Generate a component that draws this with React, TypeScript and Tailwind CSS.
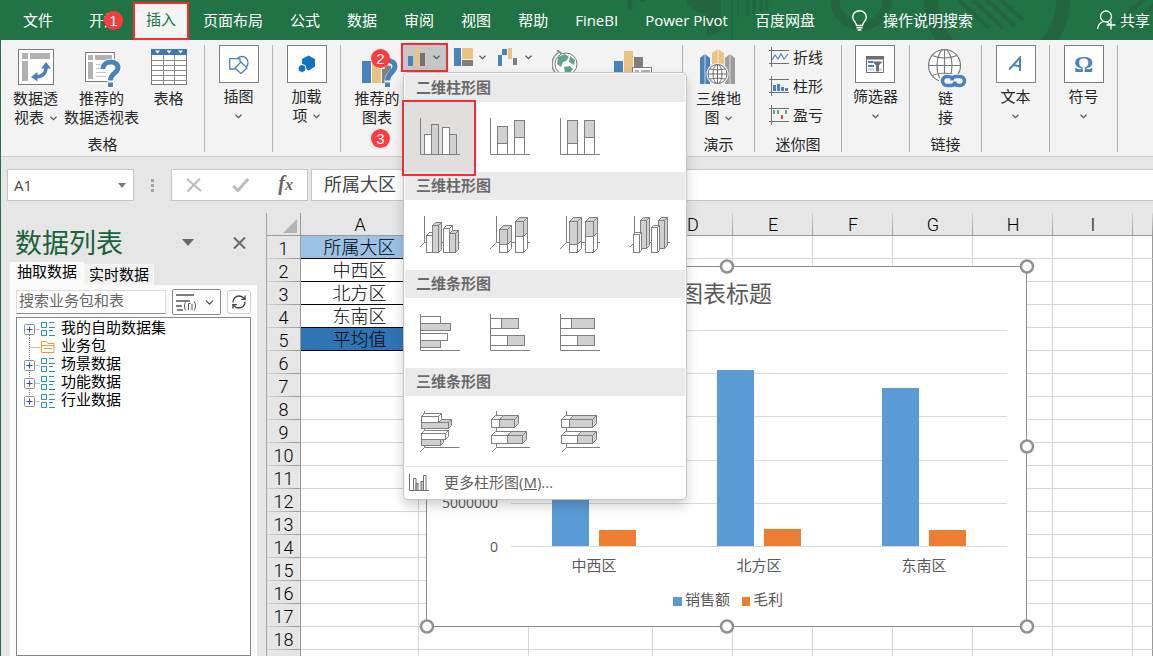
import type { ReactNode } from "react";
import { ChevronDown, RefreshCw } from "lucide-react";

const tabs = ["页面布局", "公式", "数据", "审阅", "视图", "帮助", "FineBI", "Power Pivot", "百度网盘"];

const columns = ["A", "B", "C", "D", "E", "F", "G", "H", "I", ""];
const rowCount = 19;
const cellValues = ["所属大区", "中西区", "北方区", "东南区", "平均值"];

const treeItems = [
  { name: "我的自助数据集", folder: false },
  { name: "业务包", folder: true },
  { name: "场景数据", folder: false },
  { name: "功能数据", folder: false },
  { name: "行业数据", folder: false },
];

// bar tops inside the 600x360 chart
const chartData = [
  { name: "中西区", x: 126, sales: 140, profit: 263 },
  { name: "北方区", x: 291, sales: 103, profit: 262 },
  { name: "东南区", x: 456, sales: 121, profit: 263 },
];

/* ---------- small shared pieces ---------- */

function Badge({ n, className }: { n: number; className: string }) {
  return (
    <span
      className={`absolute z-40 flex size-[19px] items-center justify-center rounded-full bg-[#fb3b3e] font-['Liberation_Sans',sans-serif] text-[15px] leading-none text-white ${className}`}
    >
      {n}
    </span>
  );
}

function Chevron({ className = "" }: { className?: string }) {
  return (
    <svg width="7" height="5" viewBox="0 0 7 5" className={`inline-block ${className}`}>
      <path d="M0.5 0.8 L3.5 3.6 L6.5 0.8" fill="none" stroke="#555" strokeWidth="1.2" />
    </svg>
  );
}

function Group({ label, className, children }: { label?: string; className: string; children: ReactNode }) {
  return (
    <div className={`relative flex h-[107px] shrink-0 flex-col border-r border-[#b1b1b1] ${className}`}>
      <div className="flex flex-1 justify-center">{children}</div>
      {label && <div className="text-center leading-4">{label}</div>}
    </div>
  );
}

function BigButton({ icon, children, className = "" }: { icon: ReactNode; children: ReactNode; className?: string }) {
  return (
    <button className={`flex flex-col items-center pt-1 leading-[19px] whitespace-nowrap ${className}`}>
      {icon}
      <span className="mt-1">{children}</span>
    </button>
  );
}

function BoxButton({ icon, children }: { icon: ReactNode; children: ReactNode }) {
  return (
    <button className="flex flex-col items-center leading-[19px] whitespace-nowrap">
      <span className="flex h-[38px] w-10 items-center justify-center border border-[#7d7d7d] bg-white">{icon}</span>
      <span className="mt-1 flex flex-col items-center">{children}</span>
    </button>
  );
}

/* ---------- ribbon icons ---------- */

function PivotIcon() {
  return (
    <svg width="36" height="36" viewBox="0 0 36 36">
      <rect x="0.5" y="0.5" width="35" height="35" fill="#fff" stroke="#7a7a7a" />
      <path d="M4 4h6v6H4zM12 4h20v6H12zM4 12h6v20H4z" fill="#b1b1b1" />
      <path d="M17 28C24 28 28 25 28 18" fill="none" stroke="#4a82bd" strokeWidth="3.500" />
      <path d="M28 13l5 6.500H23zM13 28l6.500-5v9.500z" fill="#4a82bd" />
    </svg>
  );
}

function RecommendedPivotIcon() {
  return (
    <svg width="32" height="36" viewBox="2 0 32 36" overflow="visible">
      <rect x="1.5" y="3.5" width="29" height="29" fill="#fff" stroke="#7a7a7a" />
      <path d="M4 6h5v5H4zM11 6h17v5H11zM4 13h5v17H4z" fill="#b1b1b1" />
      <path d="M12 15.5h8M12 19.500h8M12 23.500h10M12 27.500h10" stroke="#c6c6c6" />
      <path d="M19 21c-1-10 15-10 15-2.500c0 5.500-7 5-7 14M27 31v8" fill="none" stroke="#fff" strokeWidth="7" />
      <path d="M19 20c0-9 15-9 15-1.500c0 6-7.500 5-7.500 13" fill="none" stroke="#4a82bd" strokeWidth="5" />
      <path d="M24 33.500h5v4.500h-5z" fill="#4a82bd" />
    </svg>
  );
}

function TableIcon() {
  return (
    <svg width="36" height="36" viewBox="0 0 36 36">
      <rect x="0.5" y="0.5" width="35" height="35" fill="#fff" stroke="#7a7a7a" />
      <path d="M0.500 11.500h35M0.500 16.500h35M0.500 21.500h35M0.500 26.500h35M0.500 31.500h35M12.500 6v30M23.500 6v30" stroke="#8d8d8d" />
      <path d="M0 0h36v6H0z" fill="#3f76b5" />
      <path d="M4 1.500h5l-2.500 3zM15.500 1.500h5l-2.500 3zM27 1.500h5l-2.500 3z" fill="#fff" />
    </svg>
  );
}

function RecommendedChartIcon() {
  return (
    <svg width="30" height="36" viewBox="0 0 30 36" overflow="visible">
      <path d="M0 12h9v22H0z" fill="#4a82bd" />
      <path d="M10 4h9v30h-9z" fill="#eac282" />
      <path d="M20 9h9v25h-9z" fill="#7f7f7f" />
      <path d="M19 20c0-9 15-9 15-1.500c0 6-8 5-8 13M26 31v8" fill="none" stroke="#f3f3f3" strokeWidth="7" />
      <path d="M19 16c2-6 14-6 14 1.500c0 6-7.500 6-7.500 14" fill="none" stroke="#4a82bd" strokeWidth="5" />
      <path d="M23 33.500h5v4.500h-5z" fill="#4a82bd" />
    </svg>
  );
}

function ShapesIcon() {
  return (
    <svg width="20" height="20" viewBox="0 0 20 20" fill="none" stroke="#4a82bd" strokeWidth="1.300">
      <path d="M7 15H0.700V4.700H11V8" />
      <path d="M9 4a6 6 0 1 1 8 9" />
      <path d="M12 8l6 6-6 5.500-6-5.500z" fill="#fff" />
    </svg>
  );
}

function AddinsIcon() {
  return (
    <svg width="18" height="18" viewBox="0 0 18 18" fill="#0f73c6">
      <path d="M10.500 0.500L17 4v7.500l-6.500 4L8 14l-0.500-3L4 9V4z" />
      <circle cx="4" cy="13.500" r="4" stroke="#fff" />
    </svg>
  );
}

function MapIcon() {
  return (
    <svg width="36" height="36" viewBox="0 0 36 36">
      <path d="M0 9l5-4 5 4v26H0z" fill="#4a82bd" />
      <path d="M12 4l6-4 6 4v18H12z" fill="#eac282" />
      <path d="M25 9l5-4 5 4v26H25z" fill="#9c9c9c" />
      <path d="M5 5v30M18 0v20M30 5v30" stroke="#fff" strokeWidth="0.700" />
      <circle cx="17.500" cy="25" r="11" fill="#f3f3f3" />
      <g fill="#fff" stroke="#6b6b6b">
        <circle cx="17.500" cy="25" r="9.500" />
        <ellipse cx="17.500" cy="25" rx="4.500" ry="9.500" />
        <path d="M8 25h19M17.500 15.500v19M10 20q7.500 2 15 0M10 30q7.500-2 15 0" fill="none" />
      </g>
    </svg>
  );
}

function LinkIcon() {
  return (
    <svg width="36" height="36" viewBox="0 0 36 36" overflow="visible">
      <g fill="none" stroke="#7a7a7a" strokeWidth="1.200">
        <circle cx="16.500" cy="16.500" r="16" fill="#fff" />
        <ellipse cx="16.500" cy="16.500" rx="7.500" ry="16" />
        <path d="M0.500 16.500h32M16.500 0.500v32M4 6.500q12.500 5 25 0M4 26.500q12.500-5 25 0" />
      </g>
      <rect x="11" y="25" width="27" height="13" rx="6.500" fill="#f3f3f3" />
      <g fill="none" stroke="#4a82bd" strokeWidth="3.500">
        <path d="M25 29.500c-2-2-3-2-5-2h-1a4.500 4.500 0 0 0 0 9h4c2.500 0 4-1.500 4-4" />
        <path d="M26 34.500c2 2 3 2 5 2h1a4.500 4.500 0 0 0 0-9h-4c-2.500 0-4 1.500-4 4" />
      </g>
    </svg>
  );
}

function FilterIcon() {
  return (
    <svg width="18" height="17" viewBox="0 0 18 17">
      <path d="M0.500 0.500h17v16H0.500z" fill="#fff" stroke="#6f6f6f" />
      <path d="M0 0h18v3.500H0z" fill="#6f6f6f" />
      <path d="M2 5h5v2H2zM2 9h6v2H2z" fill="#4a82bd" />
      <path d="M2 12.500h6v2H2zM12 12.500h4v2h-4z" fill="#b8cde6" />
      <path d="M6.500 5.500h10l-3.500 4v6h-3v-6z" fill="#6f6f6f" />
    </svg>
  );
}

function SparkIcon({ kind }: { kind: "line" | "column" | "winloss" }) {
  return (
    <svg width="20" height="20" viewBox="0 0 20 20" fill="none">
      <path d="M0 3.500h20M0 16.500h20M2.500 0v20" stroke="#6f6f6f" />
      {kind === "line" && <path d="M3 13l3-5 3 4 3-5 3 5 4-5" stroke="#4a82bd" strokeWidth="1.200" />}
      {kind === "column" && <path d="M4 9h3v6H4zM8 8h3v7H8zM12 11h3v4h-3zM16 12h3v3h-3z" fill="#4a82bd" />}
      {kind === "winloss" && (
        <>
          <path d="M4 5h2v4H4zM8 5h2v4H8zM16 5h2v4h-2z" fill="#5ea583" />
          <path d="M12 10h2v4h-2z" fill="#d8502f" />
        </>
      )}
    </svg>
  );
}

function GlobeIcon() {
  return (
    <svg width="26" height="28" viewBox="0 0 26 28">
      <circle cx="14" cy="14" r="11" fill="#fff" stroke="#7a7a7a" />
      <path d="M6 7l7-3 4 3-3 4-3 1-2 5-4-3zM18 6l5 4-1 5-5-3zM12 17l6-1 3 3-4 5-4-1z" fill="#62a48a" />
      <path d="M7 2C-2 8-2 20 6 25" fill="none" stroke="#8f8f8f" strokeWidth="1.500" />
      <path d="M5 0l5 4" stroke="#8f8f8f" strokeWidth="2" />
    </svg>
  );
}

/* ---------- chart gallery icons ---------- */

const GREY = "#d0d0d0";
const WHITE = "#fff";

// box drawn from its front face, with depth d going up and right
function Cuboid({ x, y, w, h, d, fill }: { x: number; y: number; w: number; h: number; d: number; fill: string }) {
  return (
    <g fill={fill}>
      <path d={`M${x} ${y}l${d} ${-d}h${w}v${h}l${-d} ${d}`} />
      <rect x={x} y={y} width={w} height={h} />
      <path d={`M${x + w} ${y}l${d} ${-d}`} />
    </g>
  );
}

function Bar({ x, y, w, h, fill }: { x: number; y: number; w: number; h: number; fill: string }) {
  return <rect x={x} y={y} width={w} height={h} fill={fill} />;
}

function GalleryIcon({ children }: { children: ReactNode }) {
  return (
    <svg width="40" height="42" viewBox="0 0 40 42" fill="none" stroke="#7f7f7f" className="mt-px">
      {children}
    </svg>
  );
}

const flatAxis = <path d="M0.5 1V37.5H40" />;
const deepAxis = (x: number) => <path d={`M${x} 1V27.500H40M${x} 27.500L0 ${27.5 + x}`} />;
const deepBarAxis = (x: number) => <path d={`M${x} 0V36.500H${x + 35}M${x} 36.500l-4.500 4.500`} />;

const gallery = [
  {
    title: "二维柱形图",
    items: [
      {
        name: "簇状柱形图",
        icon: (
          <>
            <Bar x={4.5} y={17.5} w={7} h={20} fill={WHITE} />
            <Bar x={11.5} y={7.5} w={7} h={30} fill={GREY} />
            <Bar x={22.5} y={10.5} w={7} h={27} fill={WHITE} />
            <Bar x={29.5} y={17.5} w={7} h={20} fill={GREY} />
            {flatAxis}
          </>
        ),
      },
      {
        name: "堆积柱形图",
        icon: (
          <>
            <Bar x={7.5} y={9.5} w={10} h={17} fill={GREY} />
            <Bar x={7.5} y={26.5} w={10} h={11} fill={WHITE} />
            <Bar x={24.5} y={3.5} w={10} h={17} fill={GREY} />
            <Bar x={24.5} y={20.5} w={10} h={17} fill={WHITE} />
            {flatAxis}
          </>
        ),
      },
      {
        name: "百分比堆积柱形图",
        icon: (
          <>
            <Bar x={7.5} y={3.5} w={10} h={23} fill={GREY} />
            <Bar x={7.5} y={26.5} w={10} h={11} fill={WHITE} />
            <Bar x={24.5} y={3.5} w={10} h={17} fill={GREY} />
            <Bar x={24.5} y={20.5} w={10} h={17} fill={WHITE} />
            {flatAxis}
          </>
        ),
      },
    ],
  },
  {
    title: "三维柱形图",
    items: [
      {
        name: "三维簇状柱形图",
        icon: (
          <>
            {deepAxis(4.5)}
            <Cuboid x={6.5} y={20.5} w={6} h={17} d={3} fill={WHITE} />
            <Cuboid x={12.5} y={10.5} w={6} h={27} d={3} fill={GREY} />
            <Cuboid x={23.5} y={13.5} w={6} h={24} d={3} fill={WHITE} />
            <Cuboid x={29.5} y={18.5} w={6} h={19} d={3} fill={GREY} />
          </>
        ),
      },
      {
        name: "三维堆积柱形图",
        icon: (
          <>
            {deepAxis(6.5)}
            <Cuboid x={9.5} y={29.5} w={8} h={8} d={4} fill={WHITE} />
            <Cuboid x={9.5} y={14.5} w={8} h={15} d={4} fill={GREY} />
            <Cuboid x={25.5} y={21.5} w={8} h={16} d={4} fill={WHITE} />
            <Cuboid x={25.5} y={6.5} w={8} h={15} d={4} fill={GREY} />
          </>
        ),
      },
      {
        name: "三维百分比堆积柱形图",
        icon: (
          <>
            {deepAxis(6.5)}
            <Cuboid x={9.5} y={29.5} w={8} h={8} d={4} fill={WHITE} />
            <Cuboid x={9.5} y={6.5} w={8} h={23} d={4} fill={GREY} />
            <Cuboid x={25.5} y={21.5} w={8} h={16} d={4} fill={WHITE} />
            <Cuboid x={25.5} y={6.5} w={8} h={15} d={4} fill={GREY} />
          </>
        ),
      },
      {
        name: "三维柱形图",
        icon: (
          <>
            {deepAxis(4.5)}
            <Cuboid x={10.5} y={5.5} w={6} h={28} d={3} fill={GREY} />
            <Cuboid x={3.5} y={19.5} w={6} h={18} d={2} fill={WHITE} />
            <Cuboid x={28.5} y={5.5} w={6} h={28} d={3} fill={GREY} />
            <Cuboid x={21.5} y={12.5} w={6} h={25} d={2} fill={WHITE} />
          </>
        ),
      },
    ],
  },
  {
    title: "二维条形图",
    items: [
      {
        name: "簇状条形图",
        icon: (
          <>
            <Bar x={0.5} y={3.5} w={20} h={7} fill={WHITE} />
            <Bar x={0.5} y={10.5} w={30} h={7} fill={GREY} />
            <Bar x={0.5} y={20.5} w={27} h={7} fill={WHITE} />
            <Bar x={0.5} y={27.5} w={20} h={7} fill={GREY} />
            {flatAxis}
          </>
        ),
      },
      {
        name: "堆积条形图",
        icon: (
          <>
            <Bar x={0.5} y={5.5} w={11} h={10} fill={WHITE} />
            <Bar x={11.5} y={5.5} w={17} h={10} fill={GREY} />
            <Bar x={0.5} y={22.5} w={17} h={10} fill={WHITE} />
            <Bar x={17.5} y={22.5} w={17} h={10} fill={GREY} />
            {flatAxis}
          </>
        ),
      },
      {
        name: "百分比堆积条形图",
        icon: (
          <>
            <Bar x={0.5} y={5.5} w={11} h={10} fill={WHITE} />
            <Bar x={11.5} y={5.5} w={23} h={10} fill={GREY} />
            <Bar x={0.5} y={22.5} w={17} h={10} fill={WHITE} />
            <Bar x={17.5} y={22.5} w={17} h={10} fill={GREY} />
            {flatAxis}
          </>
        ),
      },
    ],
  },
  {
    title: "三维条形图",
    items: [
      {
        name: "三维簇状条形图",
        icon: (
          <>
            {deepBarAxis(4.5)}
            <Cuboid x={1.5} y={28.5} w={19} h={6} d={3} fill={GREY} />
            <Cuboid x={1.5} y={22.5} w={24} h={6} d={3} fill={WHITE} />
            <Cuboid x={1.5} y={11.5} w={27} h={6} d={3} fill={GREY} />
            <Cuboid x={1.5} y={5.5} w={17} h={6} d={3} fill={WHITE} />
          </>
        ),
      },
      {
        name: "三维堆积条形图",
        icon: (
          <>
            {deepBarAxis(6.5)}
            <Cuboid x={1.5} y={24.5} w={16} h={8} d={4} fill={WHITE} />
            <Cuboid x={17.5} y={24.5} w={15} h={8} d={4} fill={GREY} />
            <Cuboid x={1.5} y={8.5} w={8} h={8} d={4} fill={WHITE} />
            <Cuboid x={9.5} y={8.5} w={15} h={8} d={4} fill={GREY} />
          </>
        ),
      },
      {
        name: "三维百分比堆积条形图",
        icon: (
          <>
            {deepBarAxis(6.5)}
            <Cuboid x={1.5} y={24.5} w={16} h={8} d={4} fill={WHITE} />
            <Cuboid x={17.5} y={24.5} w={15} h={8} d={4} fill={GREY} />
            <Cuboid x={1.5} y={8.5} w={8} h={8} d={4} fill={WHITE} />
            <Cuboid x={9.5} y={8.5} w={23} h={8} d={4} fill={GREY} />
          </>
        ),
      },
    ],
  },
];

/* ---------- column chart drop-down ---------- */

function ChartMenu() {
  return (
    <div className="absolute top-[29px] left-[2px] z-30 w-[284px] rounded-[5px] border border-[#c3c3c3] bg-white p-px text-[#5f5f5f] shadow-[0_6px_12px_rgba(0,0,0,0.18)]">
      {gallery.map((section, s) => (
        <section key={section.title}>
          <h3 className="h-7 bg-[#eaeaea] pl-[11px] leading-[27px] font-bold text-[#6a6a6a]">{section.title}</h3>
          <div className="flex h-[70px]">
            {section.items.map((item, i) => {
              const selected = s === 0 && i === 0;
              return (
                <button
                  key={item.name}
                  aria-label={item.name}
                  className={`relative flex size-[70px] items-center justify-center ${selected ? "bg-[#e0dfdd]" : ""}`}
                >
                  <GalleryIcon>{item.icon}</GalleryIcon>
                  {selected && (
                    <span className="absolute -top-0.5 right-[-1px] -bottom-1 left-[-3px] z-10 border-2 border-[#fa2a2e]" />
                  )}
                </button>
              );
            })}
          </div>
        </section>
      ))}
      <button className="flex h-8 w-full items-center border-t border-[#e1e1e1] pl-1">
        <svg width="20" height="18" viewBox="0 0 20 18" fill="#fff" stroke="#6f6f6f">
          <path d="M4.500 4.500h2.500v12h-2.500zM14.500 1.500h2.500v15h-2.500z" />
          <path d="M7 9.500h2v7H7zM12 7.500h2.500v9H12z" fill="#c6c6c6" />
          <path d="M0.500 0V16.500H20" fill="none" />
        </svg>
        <span className="ml-[15px]">
          更多柱形图(<u>M</u>)...
        </span>
      </button>
    </div>
  );
}

/* ---------- page sections ---------- */

function TitleBar() {
  return (
    <header className="relative flex h-10 shrink-0 items-center overflow-hidden bg-[#217346] text-white">
      <svg width="560" height="40" viewBox="0 0 560 40" className="absolute top-0 right-0" fill="none" stroke="#22653f">
        <path d="M37 0v10M50 0v2" strokeWidth="5" />
        <path d="M94 0v5l12 8h8v24l14-6V0z" fill="#22653f" stroke="none" />
        <path d="M139 0v40M145 0v17" strokeWidth="1.500" />
        <path d="M154 0v16M161 0v14M168 0v12M174 0v10" strokeWidth="3" />
        <path d="M242 0a26 26 0 0 0 52 0" strokeWidth="9" />
        <path d="M338 0a66 66 0 0 0 132 0" strokeWidth="14" />
        <path d="M366 0l30 28M380 0l30 28M394 0l28 26M408 0l22 20M524 24l28-26M536 30l28-28" strokeWidth="4" />
      </svg>
      <nav className="relative flex h-full items-center gap-px">
        <button className="pr-[22px] pl-[22px]">文件</button>
        <button className="relative px-[13px]">
          开始
          <Badge n={1} className="top-0.5 right-[9px]" />
        </button>
        <button className="h-[38px] self-end border-2 border-[#fa2a2e] bg-[#f3f3f3] px-[11px] pb-1 text-[#217346]">
          插入
        </button>
        {tabs.map((tab) => (
          <button key={tab} className="px-[13px] whitespace-nowrap">
            {tab}
          </button>
        ))}
      </nav>
      <label className="relative ml-6 flex flex-1 items-center gap-4">
        <svg width="15" height="21" viewBox="0 0 15 21" fill="none" stroke="#fff" strokeWidth="1.400">
          <path d="M4.500 15.500c0-3-3.800-4.500-3.800-8.500a6.800 6.300 0 0 1 13.600 0c0 4-3.800 5.500-3.800 8.500zM4.500 17.800h6M5.500 20h4" />
        </svg>
        <input placeholder="操作说明搜索" className="w-32 bg-transparent outline-none placeholder:text-white" />
      </label>
      <button className="relative flex items-center gap-1 pr-[3px] whitespace-nowrap">
        <svg width="19" height="20" viewBox="0 0 19 20" fill="none" stroke="#fff" strokeWidth="1.300">
          <circle cx="9" cy="6.500" r="5.500" />
          <path d="M0.700 19c0-4 3-6.500 6-7.500M10 12l2.500 2M14 10.500v9M9.500 15h9" />
        </svg>
        共享
      </button>
    </header>
  );
}

function Ribbon() {
  return (
    <div className="relative z-20 flex h-[117px] shrink-0 border-b border-[#cfcfcf] bg-[#f3f3f3] pt-[5px] text-[#262626]">
      <Group label="表格" className="w-[204px]">
        <BigButton icon={<PivotIcon />} className="w-[54px]">
          数据透
          <br />
          视表 <Chevron className="ml-0.5" />
        </BigButton>
        <BigButton icon={<RecommendedPivotIcon />} className="w-[78px]">
          推荐的
          <br />
          数据透视表
        </BigButton>
        <BigButton icon={<TableIcon />} className="w-14">
          表格
        </BigButton>
      </Group>
      <Group className="w-[68px]">
        <BoxButton icon={<ShapesIcon />}>
          插图
          <Chevron className="mt-2" />
        </BoxButton>
      </Group>
      <Group className="w-[68px]">
        <BoxButton icon={<AddinsIcon />}>
          <span>
            加载
            <br />项 <Chevron className="ml-0.5" />
          </span>
        </BoxButton>
      </Group>
      <Group label="图表" className="w-[342px]">
        <BigButton icon={<RecommendedChartIcon />} className="w-[60px] pl-3">
          推荐的
          <br />
          图表
        </BigButton>
        <Badge n={2} className="top-1 left-[30px]" />
        <Badge n={3} className="top-[84px] left-[30px]" />
        <div className="flex flex-1 items-start">
          <div className="relative -mt-0.5">
            <button
              aria-label="插入柱形图或条形图"
              className="flex h-[29px] w-[47px] items-center justify-between border-2 border-[#fa2a2e] bg-[#c6c6c6] pr-1.5 pl-[5px]"
            >
              <svg width="17" height="17" viewBox="0 0 17 17">
                <path d="M0 7h5v10H0z" fill="#4a82bd" />
                <path d="M6 0h5v17H6z" fill="#eac282" />
                <path d="M12 4h5v13h-5z" fill="#737373" />
              </svg>
              <Chevron />
            </button>
            <ChartMenu />
          </div>
          <button aria-label="插入层次结构图表" className="mt-[3px] ml-1.5 flex items-center gap-1.5">
            <svg width="19" height="18" viewBox="0 0 19 18">
              <path d="M0 0h7v18H0z" fill="#4a82bd" />
              <path d="M8 0h11v11H8z" fill="#eac282" />
              <path d="M8 12h11v6H8z" fill="#7f7f7f" />
            </svg>
            <Chevron />
          </button>
          <button aria-label="插入瀑布图" className="mt-[3px] ml-3 flex items-center gap-2">
            <svg width="19" height="18" viewBox="0 0 19 18">
              <path d="M0 7h4V1h5v6H4v11H0z" fill="#4a82bd" />
              <path d="M10 0h4v11h-4z" fill="#eac282" />
              <path d="M15 10h4v7h-4z" fill="#7f7f7f" />
            </svg>
            <Chevron />
          </button>
          <button aria-label="地图" className="mt-[5px] ml-5">
            <GlobeIcon />
          </button>
          <button aria-label="数据透视图" className="mt-[6px] ml-9">
            <svg width="39" height="36" viewBox="0 0 39 36">
              <path d="M0 10h9v22H0z" fill="#4a82bd" />
              <path d="M10 0h9v32h-9z" fill="#eac282" />
              <path d="M20 6h9v26h-9z" fill="#7f7f7f" />
              <path d="M18.500 16.500h19v19h-19z" fill="#fff" stroke="#7a7a7a" />
              <path d="M21 19h4v3h-4zM27 19h9v3h-9z" fill="#b1b1b1" />
            </svg>
          </button>
        </div>
      </Group>
      <Group label="演示" className="w-[72px]">
        <BigButton icon={<MapIcon />}>
          三维地
          <br />图 <Chevron className="ml-0.5" />
        </BigButton>
      </Group>
      <Group label="迷你图" className="w-[87px]">
        <div className="flex flex-col items-start gap-[5px] pr-1">
          <button className="flex h-6 items-center gap-1">
            <SparkIcon kind="line" />
            折线
          </button>
          <button className="flex h-6 items-center gap-1">
            <SparkIcon kind="column" />
            柱形
          </button>
          <button className="flex h-6 items-center gap-1">
            <SparkIcon kind="winloss" />
            盈亏
          </button>
        </div>
      </Group>
      <Group className="w-[68px]">
        <BoxButton icon={<FilterIcon />}>
          筛选器
          <Chevron className="mt-2" />
        </BoxButton>
      </Group>
      <Group label="链接" className="w-[72px]">
        <BigButton icon={<LinkIcon />}>
          链
          <br />接
        </BigButton>
      </Group>
      <Group className="w-[68px]">
        <BoxButton
          icon={
            <svg width="14" height="16" viewBox="0 0 14 16" fill="none" stroke="#4a82bd" strokeWidth="2">
              <path d="M0 13.500L11 1.500V15M4.500 9L11 10.500" />
            </svg>
          }
        >
          文本
          <Chevron className="mt-2" />
        </BoxButton>
      </Group>
      <Group className="w-[68px]">
        <BoxButton
          icon={<span className="font-['Liberation_Serif',serif] text-2xl leading-none font-bold text-[#4a82bd]">Ω</span>}
        >
          符号
          <Chevron className="mt-2" />
        </BoxButton>
      </Group>
    </div>
  );
}

function FormulaBar() {
  return (
    <div className="flex h-14 shrink-0 pt-3 pl-1.5">
      <div className="flex h-8 w-[127px] items-center border border-[#c6c6c6] bg-white pr-[7px] pl-1.5">
        <input aria-label="名称框" defaultValue="A1" className="min-w-0 flex-1 text-[#444] outline-none" />
        <button aria-label="展开名称框">
          <svg width="8" height="5" viewBox="0 0 8 5">
            <path d="M0 0h8L4 5z" fill="#777" />
          </svg>
        </button>
      </div>
      <div className="flex h-8 w-[37px] flex-col items-center justify-center gap-0.5">
        <i className="size-[3px] bg-[#a5a5a5]" />
        <i className="size-[3px] bg-[#a5a5a5]" />
        <i className="size-[3px] bg-[#a5a5a5]" />
      </div>
      <div className="flex h-8 w-[137px] items-center justify-between border border-[#c6c6c6] bg-white px-3.5">
        <button aria-label="取消">
          <svg width="16" height="14" viewBox="0 0 16 14">
            <path d="M1 1l14 12M14 0.500L1.500 13.500" stroke="#bdbdbd" strokeWidth="2.200" />
          </svg>
        </button>
        <button aria-label="输入">
          <svg width="17" height="14" viewBox="0 0 17 14">
            <path d="M1 8l5 4.500L16 1" fill="none" stroke="#bdbdbd" strokeWidth="3" />
          </svg>
        </button>
        <button
          aria-label="插入函数"
          className="font-['Liberation_Serif',serif] text-xl leading-none font-bold text-[#666] italic"
        >
          f<span className="text-base">x</span>
        </button>
      </div>
      <input
        aria-label="编辑栏"
        defaultValue="所属大区"
        className="ml-[3px] h-8 min-w-0 flex-1 border border-r-0 border-[#c6c6c6] bg-white pb-1 pl-3 text-lg text-[#444] outline-none"
      />
    </div>
  );
}

function TreeMark({ folder, first, last }: { folder: boolean; first: boolean; last: boolean }) {
  return (
    <svg width="33" height="18" viewBox="0 0 33 18" fill="none">
      <path
        d={`M5.500 ${first ? 9 : 0}V${last ? 9 : 18}M5.500 9.500H16`}
        stroke="#808080"
        strokeDasharray="1 1"
      />
      {folder ? (
        <g stroke="#f39a33">
          <path d="M17.500 14.500v-11h5l1.500 2h6v9zM17.500 7.500h13" />
          <path d="M20 10.500h8" />
        </g>
      ) : (
        <>
          <rect x="0.500" y="4.500" width="10" height="10" rx="1" fill="#fafafa" stroke="#919191" />
          <path d="M2.500 9.500h6M5.500 6.500v6" stroke="#3a4f9c" />
          <g stroke="#1b95bf">
            <path d="M17.500 2.500h5v5h-5zM17.500 10.500h5v5h-5z" />
            <path d="M25 2.500h5M25 7.500h6M25 10.500h4M25 15.500h6" />
          </g>
        </>
      )}
    </svg>
  );
}

function DataPanel() {
  return (
    <aside className="flex w-[265px] shrink-0 flex-col pl-[9px]">
      <div className="flex h-[49px] shrink-0 items-center pt-2.5 pr-5 pl-[5px]">
        <h2 className="text-[27px] leading-9 text-[#1b6237]">数据列表</h2>
        <button aria-label="面板选项" className="ml-auto">
          <svg width="12" height="7" viewBox="0 0 12 7">
            <path d="M0 0h12L6 7z" fill="#6a6a6a" />
          </svg>
        </button>
        <button aria-label="关闭" className="ml-[39px]">
          <svg width="13" height="12" viewBox="0 0 13 12">
            <path d="M1 0.500l11 11M12 0.500l-11 11" stroke="#6a6a6a" strokeWidth="2" />
          </svg>
        </button>
      </div>
      <div className="flex h-[23px] shrink-0 items-end leading-[19px] text-black">
        <button className="h-[23px] bg-[#fafafa] px-[7px] pb-1">抽取数据</button>
        <button className="h-[21px] border border-[#f7f7f7] bg-[#f0f0f0] px-1">实时数据</button>
      </div>
      <div className="mr-[9px] flex flex-1 flex-col border-r border-white bg-[#fafafa] pt-1 pr-[5px] pl-1.5">
        <div className="flex items-center">
          <input
            aria-label="搜索业务包和表"
            placeholder="搜索业务包和表"
            className="h-6 w-[150px] border border-[#dcdcdc] border-b-[#8a8a8a] bg-white pb-1 pl-0.5 outline-none placeholder:text-[#666]"
          />
          <button
            aria-label="筛选类型"
            className="ml-1.5 flex h-[26px] w-[49px] items-center justify-between rounded-[2px] border border-[#8a8a8a] bg-[#fdfdfd] pr-1 pl-[3px]"
          >
            <svg width="21" height="20" viewBox="0 0 21 20" fill="none" stroke="#555">
              <path d="M0 3h18M0 9h14M0 14h6M1 18h6" strokeWidth="1.600" />
              <path d="M10 9.500c-2 2-2 7 0 9M18 9.500c2 2 2 7 0 9M12.500 18v-6.500h2M16 12v6" />
            </svg>
            <ChevronDown size={13} strokeWidth={2} color="#444" />
          </button>
          <button
            aria-label="刷新"
            className="ml-1.5 flex size-6 items-center justify-center rounded-[3px] border border-[#d0d0d0] bg-[#fdfdfd]"
          >
            <RefreshCw size={16} strokeWidth={2} color="#444" />
          </button>
        </div>
        <ul className="mt-0.5 flex-1 border border-[#828790] bg-white pt-0.5 pl-[7px] text-black">
          {treeItems.map((item, i) => (
            <li key={item.name} className="flex h-[18px] gap-1 leading-[14px]">
              <TreeMark folder={item.folder} first={i === 0} last={i === treeItems.length - 1} />
              {item.name}
            </li>
          ))}
        </ul>
      </div>
    </aside>
  );
}

function Chart() {
  return (
    <div className="absolute top-[53px] left-[159px] h-[361px] w-[601px]">
      <svg width="601" height="361" viewBox="0 0 601 361" overflow="visible" fontSize="15" fill="#595959">
        <rect x="0.5" y="0.5" width="600" height="360" fill="#fff" stroke="#8c8c8c" />
        <text x="300" y="36" fontSize="23" textAnchor="middle">
          图表标题
        </text>
        <path d="M85 64.500h496M85 107.500h496M85 150.500h496M85 194.500h496M85 237.500h496M85 280.500h496" stroke="#d9d9d9" />
        {chartData.map((d) => (
          <g key={d.name}>
            <rect x={d.x} y={d.sales + 1} width="37" height={279 - d.sales} fill="#5b9bd5" />
            <rect x={d.x + 47} y={d.profit + 1} width="37" height={279 - d.profit} fill="#ed7d31" />
            <text x={d.x + 42} y="305" textAnchor="middle">
              {d.name}
            </text>
          </g>
        ))}
        <text x="72" y="242" fontSize="14" textAnchor="end">
          5000000
        </text>
        <text x="72" y="286" fontSize="14" textAnchor="end">
          0
        </text>
        <rect x="247" y="331" width="9" height="9" fill="#5b9bd5" />
        <text x="259" y="339">
          销售额
        </text>
        <rect x="316" y="331" width="8" height="9" fill="#ed7d31" />
        <text x="327" y="339">
          毛利
        </text>
        <g fill="#fff" stroke="#929292" strokeWidth="2.500">
          <circle cx="301" cy="0.500" r="6" />
          <circle cx="601" cy="0.500" r="6" />
          <circle cx="601" cy="180.500" r="6" />
          <circle cx="601" cy="360.500" r="6" />
          <circle cx="301" cy="360.500" r="6" />
          <circle cx="1" cy="360.500" r="6" />
        </g>
      </svg>
    </div>
  );
}

function Sheet() {
  return (
    <div className="relative min-w-0 flex-1 border-l border-[#a6a6a6]">
      <table className="w-full table-fixed border-separate border-spacing-0 font-['Roboto','Noto_Sans_CJK_SC',sans-serif] text-lg font-light text-black">
        <colgroup>
          <col className="w-[34px]" />
          <col className="w-[118px]" />
          <col className="w-[110px]" />
          <col className="w-[124px]" />
          <col className="w-20" />
          <col className="w-20" />
          <col className="w-20" />
          <col className="w-20" />
          <col className="w-20" />
          <col className="w-20" />
          <col />
        </colgroup>
        <thead>
          <tr>
            <th className="h-[23px] border-r border-b border-[#9b9b9b] p-0">
              <svg width="14" height="14" viewBox="0 0 14 14" className="mt-1 mr-[3px] ml-auto">
                <path d="M14 0v14H0z" fill="#b4b4b4" />
              </svg>
            </th>
            {columns.map((c, i) => (
              <th
                key={i}
                className="h-[23px] border-b border-[#9b9b9b] bg-[linear-gradient(to_bottom,#d6d6d6,#999)] bg-[length:1px_100%] bg-right bg-no-repeat p-0 pt-0.5 leading-5 font-light"
              >
                {c}
              </th>
            ))}
          </tr>
        </thead>
        <tbody>
          {Array.from({ length: rowCount }, (_, r) => (
            <tr key={r}>
              <th className="h-[23px] border-r border-[#9b9b9b] bg-[linear-gradient(to_right,#d6d6d6,#999)] bg-[length:100%_1px] bg-bottom bg-no-repeat p-0 pt-[3px] leading-5 font-light">
                {r + 1}
              </th>
              {columns.map((_c, i) => {
                let look = "border-[#d4d4d4] bg-white";
                if (i === 0 && r < 5) look = "border-b-black border-r-[#d4d4d4] bg-white";
                if (i === 0 && r === 0) look = "border-b-black border-r-[#d4d4d4] bg-[#9bc2e6]";
                if (i === 0 && r === 4) look = "border-b-black border-r-[#d4d4d4] bg-[#2f75b5]";
                if (i === columns.length - 1) look = "border-b-[#d4d4d4] border-r-[#999] bg-white";
                return (
                  <td key={i} className={`h-[23px] border-r border-b p-0 pt-0.5 text-center leading-5 ${look}`}>
                    {i === 0 ? cellValues[r] : ""}
                  </td>
                );
              })}
            </tr>
          ))}
        </tbody>
      </table>
      <Chart />
    </div>
  );
}

function App() {
  return (
    <div className="flex h-screen flex-col overflow-hidden border-l border-[#217346] bg-[#e6e6e6] font-['Open_Sans','Noto_Sans_CJK_SC',sans-serif] text-[15px]">
      <TitleBar />
      <Ribbon />
      <FormulaBar />
      <main className="flex min-h-0 flex-1 overflow-hidden">
        <DataPanel />
        <Sheet />
      </main>
    </div>
  );
}

export default App;
